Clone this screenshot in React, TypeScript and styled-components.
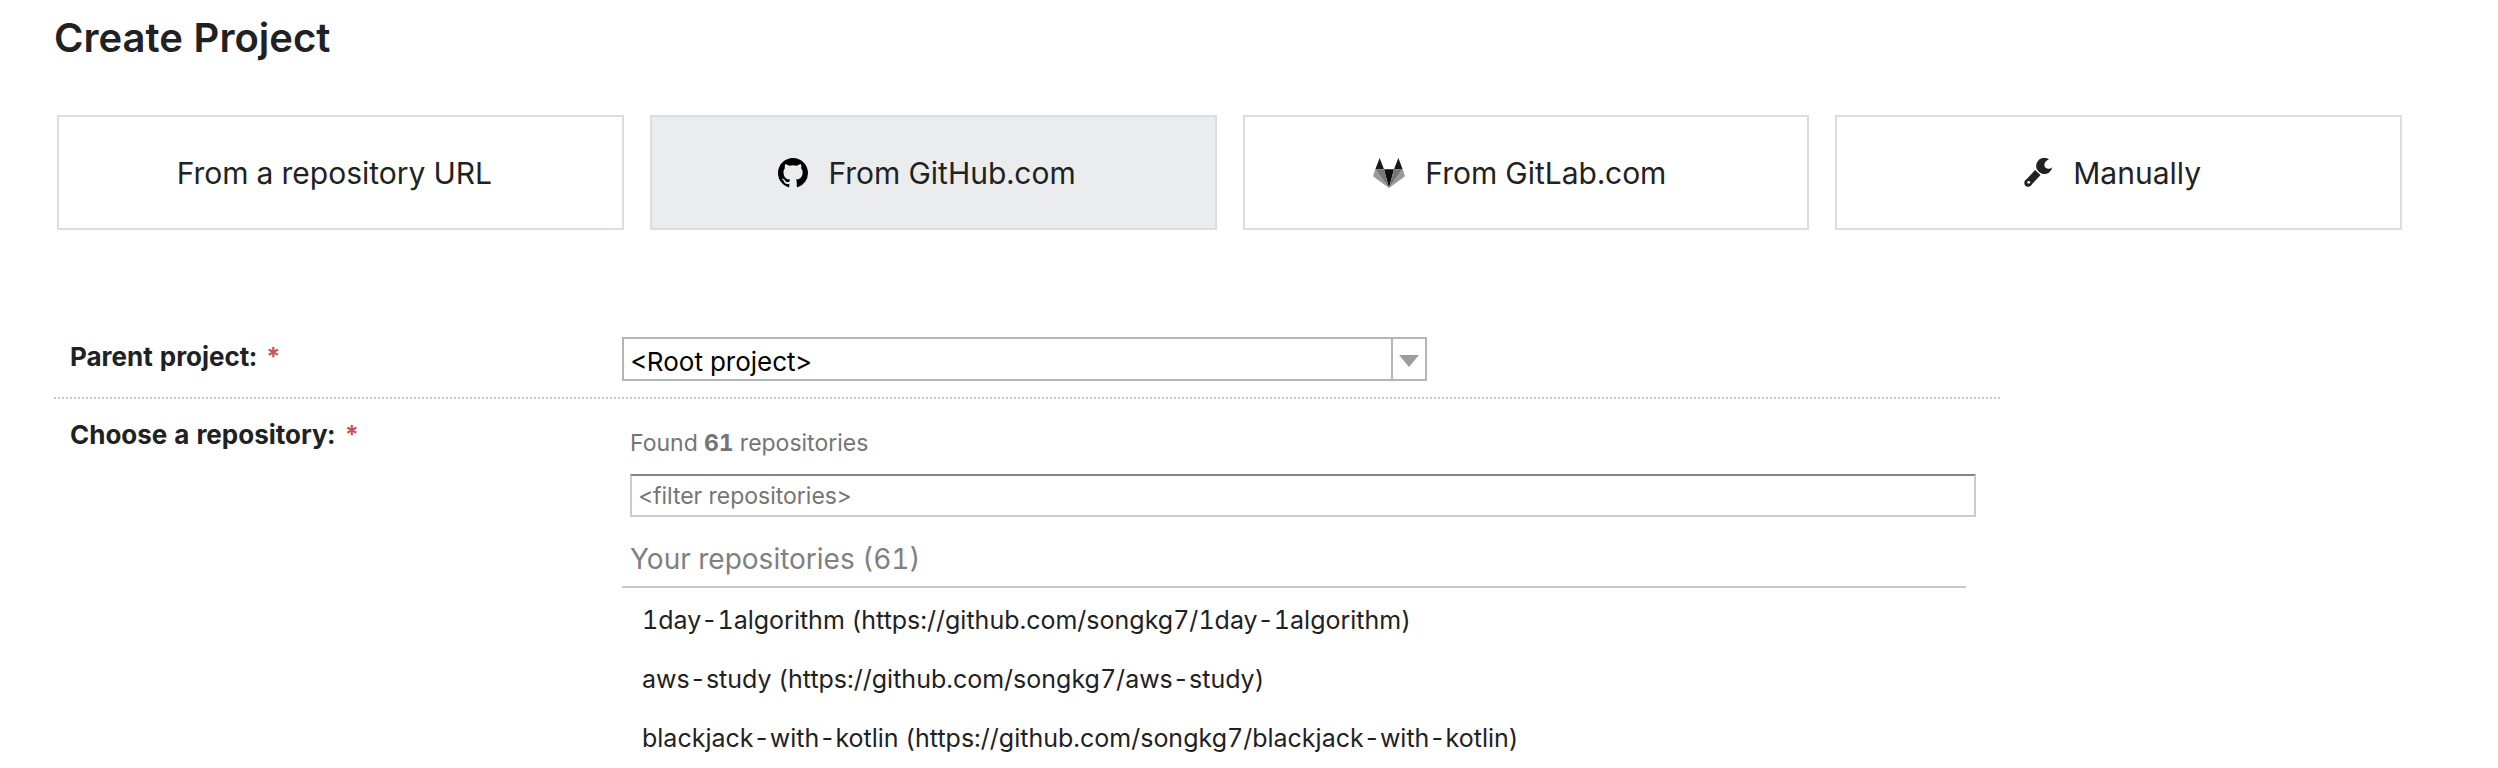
import React from "react";
import styled, { createGlobalStyle } from "styled-components";

const GlobalStyle = createGlobalStyle`
  * { box-sizing: border-box; }
  body {
    margin: 0;
    background: #fff;
    color: #1f2224;
    font-family: Inter, "Liberation Sans", sans-serif;
    font-variant-numeric: tabular-nums;
  }
`;

const Page = styled.main`
  padding: 14px 96px 0 54px;
`;

const Title = styled.h1`
  margin: 0 0 53px;
  font-size: 40px;
  line-height: 48px;
  font-weight: 600;
`;

const SourceBar = styled.nav`
  display: grid;
  grid-template-columns: repeat(4, 1fr);
  gap: 26px;
  margin: 0 0 91px 3px;
`;

const SourceButton = styled.button<{ $active?: boolean }>`
  display: flex;
  align-items: center;
  justify-content: center;
  gap: 20px;
  height: 115px;
  padding: 0 24px 0 12px;
  border: 2px solid #dcdddd;
  background: ${(p) => (p.$active ? "#ebecee" : "#fff")};
  color: inherit;
  font: inherit;
  font-size: 30px;
  line-height: 36px;
  cursor: pointer;

  svg {
    flex: none;
  }
`;

const Form = styled.form`
  max-width: 1946px;
`;

const Row = styled.div<{ $divided?: boolean }>`
  display: grid;
  grid-template-columns: 568px 1fr;
  border-bottom: ${(p) => (p.$divided ? "2px dotted #c8c8c8" : "none")};
`;

const Label = styled.label`
  padding: 20px 0 0 16px;
  font-size: 26px;
  line-height: 32px;
  font-weight: 700;
`;

const Required = styled.span`
  margin-left: 2px;
  color: #cc4f5a;
  font-size: 25px;
`;

const Field = styled.div`
  padding: 16px 0;
`;

const SelectBox = styled.div`
  position: relative;
  max-width: 805px;
`;

const Select = styled.select`
  display: block;
  appearance: none;
  width: 100%;
  height: 44px;
  padding: 4px 44px 0 6px;
  border: 2px solid #b4b5b8;
  border-radius: 0;
  background: #fff;
  color: #000;
  font: inherit;
  font-size: 26px;
`;

const SelectArrow = styled.span`
  position: absolute;
  top: 2px;
  right: 2px;
  bottom: 2px;
  width: 34px;
  display: flex;
  align-items: center;
  justify-content: center;
  padding-top: 4px;
  border-left: 2px solid #b4b5b8;
  pointer-events: none;
`;

const Found = styled.p`
  margin: 14px 8px 17px;
  color: #757575;
  font-size: 23px;
  line-height: 28px;
`;

const Filter = styled.input`
  display: block;
  width: calc(100% - 32px);
  height: 43px;
  margin: 0 24px 0 8px;
  padding: 0 6px;
  border: 2px solid #cbcbcb;
  border-top-color: #858585;
  border-radius: 0;
  background: #fff;
  color: #1f2224;
  font: inherit;
  font-size: 23px;

  &::placeholder {
    color: #757575;
    opacity: 1;
  }
`;

const GroupTitle = styled.h2`
  margin: 24px 34px 2px 0;
  padding: 0 8px 9px;
  border-bottom: 2px solid #c8c8c8;
  color: #808080;
  font-size: 28px;
  line-height: 36px;
  font-weight: 400;
`;

const RepoList = styled.ul`
  margin: 0;
  padding: 0;
  list-style: none;
`;

const RepoLink = styled.a`
  display: block;
  padding: 14px 20px 13px;
  color: inherit;
  font-size: 25px;
  line-height: 32px;
  text-decoration: none;
`;

const GitHubIcon = () => (
  <svg width="30" height="30" viewBox="0 0 16 16" fill="#000" aria-hidden="true">
    <path d="M8 0C3.58 0 0 3.58 0 8c0 3.54 2.29 6.53 5.47 7.59.4.07.55-.17.55-.38 0-.19-.01-.82-.01-1.49-2.01.37-2.53-.49-2.69-.94-.09-.23-.48-.94-.82-1.13-.28-.15-.68-.52-.01-.53.63-.01 1.08.58 1.23.82.72 1.21 1.87.87 2.33.66.07-.52.28-.87.51-1.07-1.78-.2-3.64-.89-3.64-3.95 0-.87.31-1.59.82-2.15-.08-.2-.36-1.02.08-2.12 0 0 .67-.21 2.2.82.64-.18 1.32-.27 2-.27s1.36.09 2 .27c1.53-1.04 2.2-.82 2.2-.82.44 1.1.16 1.92.08 2.12.51.56.82 1.27.82 2.15 0 3.07-1.87 3.75-3.65 3.95.29.25.54.73.54 1.48 0 1.07-.01 1.93-.01 2.2 0 .21.15.46.55.38A8.01 8.01 0 0 0 16 8c0-4.42-3.58-8-8-8z" />
  </svg>
);

const GitLabIcon = () => (
  <svg width="32" height="30" viewBox="0 0 96 90" aria-hidden="true">
    <path d="M20 0 33 34H7zM76 0 89 34H63z" fill="#17181a" />
    <path d="M33 34h30L48 90z" fill="#0c0d0e" />
    <path d="M7 34h26l15 56zM89 34H63L48 90z" fill="#777" />
    <path d="M7 34 0 55l48 35zM89 34l7 21-48 35z" fill="#999" />
  </svg>
);

const WrenchIcon = () => (
  <svg width="29" height="29" viewBox="0 0 86 86" aria-hidden="true">
    <path d="M74 4A24 24 0 1 0 84 26C80 33 70 34 64 29C57 22 60 10 74 4Z" fill="currentColor" />
    <path d="M12 74 41 43" stroke="currentColor" strokeWidth="22" />
    <circle cx="12" cy="74" r="11" fill="currentColor" />
    <circle cx="14" cy="72" r="4" fill="#fff" />
  </svg>
);

const repositories = ["1day-1algorithm", "aws-study", "blackjack-with-kotlin"];

export default function App() {
  return (
    <>
      <GlobalStyle />
      <Page>
        <Title>Create Project</Title>
        <SourceBar>
          <SourceButton type="button">From a repository URL</SourceButton>
          <SourceButton type="button" $active aria-pressed="true">
            <GitHubIcon />
            From GitHub.com
          </SourceButton>
          <SourceButton type="button">
            <GitLabIcon />
            From GitLab.com
          </SourceButton>
          <SourceButton type="button">
            <WrenchIcon />
            Manually
          </SourceButton>
        </SourceBar>
        <Form>
          <Row $divided>
            <Label htmlFor="parent">
              Parent project: <Required>*</Required>
            </Label>
            <Field>
              <SelectBox>
                <Select id="parent">
                  <option>&lt;Root project&gt;</option>
                </Select>
                <SelectArrow>
                  <svg width="20" height="12" viewBox="0 0 20 12" fill="#9c9e9e" aria-hidden="true">
                    <path d="M0 0h20L10 12z" />
                  </svg>
                </SelectArrow>
              </SelectBox>
            </Field>
          </Row>
          <Row>
            <Label htmlFor="filter">
              Choose a repository: <Required>*</Required>
            </Label>
            <Field>
              <Found>
                Found <b>61</b> repositories
              </Found>
              <Filter id="filter" type="text" placeholder="<filter repositories>" />
              <GroupTitle>Your repositories (61)</GroupTitle>
              <RepoList>
                {repositories.map((name) => (
                  <li key={name}>
                    <RepoLink href={`#${name}`}>
                      {name} (https://github.com/songkg7/{name})
                    </RepoLink>
                  </li>
                ))}
              </RepoList>
            </Field>
          </Row>
        </Form>
      </Page>
    </>
  );
}
